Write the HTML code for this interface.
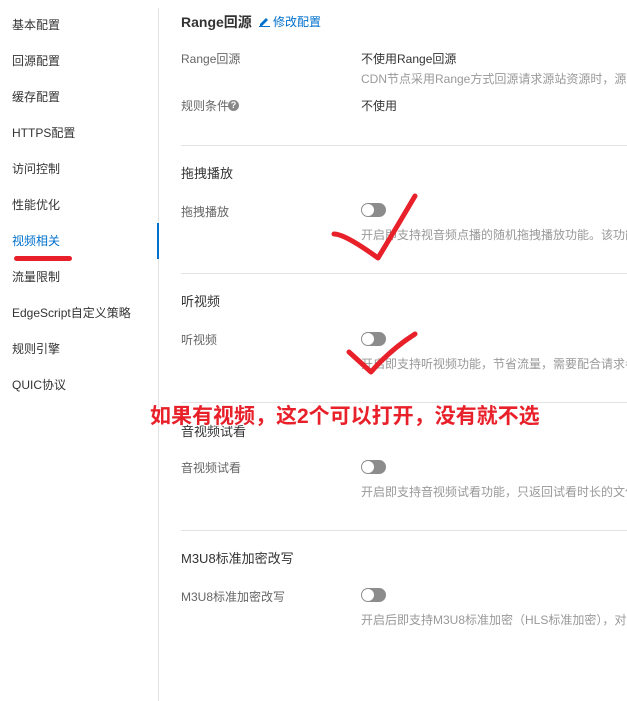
<!DOCTYPE html>
<html><head><meta charset="utf-8"><style>
html,body{margin:0;padding:0}
body{width:627px;height:701px;overflow:hidden;background:#fff;font-family:"Liberation Sans","Noto Sans CJK SC",sans-serif;color:#333}
#w{position:relative;width:627px;height:701px;overflow:hidden}
.a{position:absolute;white-space:nowrap;font-size:12px;line-height:14px}
.s{color:#333}
.g{color:#666}
.d{color:#999}
.h{position:absolute;left:181px;width:446px;height:1px;background:#e3e3e3}
.t{position:absolute;left:361px;width:25px;height:14px;border-radius:7px;background:#8c8c8c}
.t:after{content:"";position:absolute;left:1px;top:1px;width:12px;height:12px;border-radius:50%;background:#fff}
.sec{font-size:13px;color:#333}
</style></head><body><div id="w">
<div style="position:absolute;left:158px;top:8px;width:1px;height:693px;background:#e3e3e3"></div>
<div style="position:absolute;left:157px;top:223px;width:2px;height:36px;background:#0070cc"></div>
<div class="a s" style="left:12px;top:18px">基本配置</div>
<div class="a s" style="left:12px;top:54px">回源配置</div>
<div class="a s" style="left:12px;top:90px">缓存配置</div>
<div class="a s" style="left:12px;top:126px">HTTPS配置</div>
<div class="a s" style="left:12px;top:162px">访问控制</div>
<div class="a s" style="left:12px;top:198px">性能优化</div>
<div class="a" style="left:12px;top:234px;color:#0070cc">视频相关</div>
<div style="position:absolute;left:14px;top:256px;width:58px;height:5px;border-radius:3px;background:#e8202a"></div>
<div class="a s" style="left:12px;top:270px">流量限制</div>
<div class="a s" style="left:12px;top:306px">EdgeScript自定义策略</div>
<div class="a s" style="left:12px;top:342px">规则引擎</div>
<div class="a s" style="left:12px;top:378px">QUIC协议</div>

<div class="a" style="left:181px;top:14px;font-size:14px;font-weight:bold;line-height:16px">Range回源</div>
<svg style="position:absolute;left:259px;top:16px" width="11" height="11" viewBox="0 0 11 11"><path d="M1 8 L7 2 L9 4 L3 10 L1 10Z" fill="#0070cc"/><rect x="0" y="10" width="11" height="1" fill="#0070cc"/></svg>
<div class="a" style="left:273px;top:15px;color:#0070cc">修改配置</div>
<div class="a g" style="left:181px;top:52px">Range回源</div>
<div class="a s" style="left:361px;top:52px">不使用Range回源</div>
<div class="a d" style="left:361px;top:72px">CDN节点采用Range方式回源请求源站资源时，源站只需</div>
<div class="a g" style="left:181px;top:99px">规则条件</div>
<div style="position:absolute;left:228px;top:100px;width:11px;height:11px;border-radius:50%;background:#888;color:#fff;font-size:9px;line-height:11px;text-align:center;font-weight:bold">?</div>
<div class="a s" style="left:361px;top:99px">不使用</div>
<div class="h" style="top:145px"></div>
<div class="a sec" style="left:181px;top:167px">拖拽播放</div>
<div class="a g" style="left:181px;top:205px">拖拽播放</div>
<div class="t" style="top:203px"></div>
<div class="a d" style="left:361px;top:228px">开启即支持视音频点播的随机拖拽播放功能。该功能仅对</div>
<div class="h" style="top:273px"></div>
<div class="a sec" style="left:181px;top:295px">听视频</div>
<div class="a g" style="left:181px;top:333px">听视频</div>
<div class="t" style="top:332px"></div>
<div class="a d" style="left:361px;top:357px">开启即支持听视频功能，节省流量，需要配合请求参数使</div>
<div class="h" style="top:402px"></div>
<div class="a sec" style="left:181px;top:425px">音视频试看</div>
<div class="a g" style="left:181px;top:461px">音视频试看</div>
<div class="t" style="top:460px"></div>
<div class="a d" style="left:361px;top:485px">开启即支持音视频试看功能，只返回试看时长的文件内容</div>
<div class="h" style="top:530px"></div>
<div class="a sec" style="left:181px;top:552px">M3U8标准加密改写</div>
<div class="a g" style="left:181px;top:590px">M3U8标准加密改写</div>
<div class="t" style="top:588px"></div>
<div class="a d" style="left:361px;top:613px">开启后即支持M3U8标准加密（HLS标准加密），对解密</div>

<svg style="position:absolute;left:0;top:0" width="627" height="701">
<path d="M334 234 Q345 234 378 258 Q395 230 415 196" stroke="#e8202a" stroke-width="5" fill="none" stroke-linecap="round" stroke-linejoin="round"/>
<path d="M349 352 Q360 362 371 372 Q390 350 415 334" stroke="#e8202a" stroke-width="5" fill="none" stroke-linecap="round" stroke-linejoin="round"/>
</svg>
<div class="a" style="left:150px;top:404px;font-size:21px;line-height:26px;font-weight:bold;color:#e8202a;text-shadow:-1px -1px 0 #fff,1px -1px 0 #fff,-1px 1px 0 #fff,1px 1px 0 #fff,0 0 2px #fff">如果有视频，这2个可以打开，没有就不选</div>
</div></body></html>
